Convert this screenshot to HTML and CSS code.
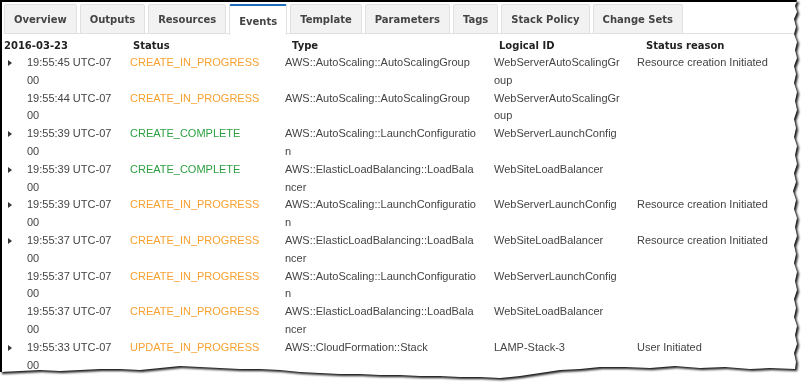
FILE: index.html
```html
<!DOCTYPE html>
<html lang="en">
<head>
    <meta charset="UTF-8">
    <title>Stack Events</title>
    <link rel="stylesheet" href="styles.css">
</head>
<body>
<div class="frame">
    <div class="sheet">
        <div class="tabs">
            <div class="tab">Overview</div>
            <div class="tab">Outputs</div>
            <div class="tab">Resources</div>
            <div class="tab active">Events</div>
            <div class="tab">Template</div>
            <div class="tab">Parameters</div>
            <div class="tab">Tags</div>
            <div class="tab">Stack Policy</div>
            <div class="tab">Change Sets</div>
        </div>
        <div class="head">
            <div>2016-03-23</div>
            <div>Status</div>
            <div>Type</div>
            <div>Logical ID</div>
            <div>Status reason</div>
        </div>
        <div class="events">
            <div class="row">
                <div class="caret"><span class="tri"></span></div>
                <div class="time">19:55:45 UTC-0700</div>
                <div class="progress">CREATE_IN_PROGRESS</div>
                <div class="type">AWS::AutoScaling::AutoScalingGroup</div>
                <div class="logical">WebServerAutoScalingGroup</div>
                <div>Resource creation Initiated</div>
            </div>
            <div class="row">
                <div class="caret"></div>
                <div class="time">19:55:44 UTC-0700</div>
                <div class="progress">CREATE_IN_PROGRESS</div>
                <div class="type">AWS::AutoScaling::AutoScalingGroup</div>
                <div class="logical">WebServerAutoScalingGroup</div>
                <div></div>
            </div>
            <div class="row">
                <div class="caret"><span class="tri"></span></div>
                <div class="time">19:55:39 UTC-0700</div>
                <div class="complete">CREATE_COMPLETE</div>
                <div class="type">AWS::AutoScaling::LaunchConfiguration</div>
                <div class="logical">WebServerLaunchConfig</div>
                <div></div>
            </div>
            <div class="row">
                <div class="caret"><span class="tri"></span></div>
                <div class="time">19:55:39 UTC-0700</div>
                <div class="complete">CREATE_COMPLETE</div>
                <div class="type">AWS::ElasticLoadBalancing::LoadBalancer</div>
                <div class="logical">WebSiteLoadBalancer</div>
                <div></div>
            </div>
            <div class="row">
                <div class="caret"><span class="tri"></span></div>
                <div class="time">19:55:39 UTC-0700</div>
                <div class="progress">CREATE_IN_PROGRESS</div>
                <div class="type">AWS::AutoScaling::LaunchConfiguration</div>
                <div class="logical">WebServerLaunchConfig</div>
                <div>Resource creation Initiated</div>
            </div>
            <div class="row">
                <div class="caret"><span class="tri"></span></div>
                <div class="time">19:55:37 UTC-0700</div>
                <div class="progress">CREATE_IN_PROGRESS</div>
                <div class="type">AWS::ElasticLoadBalancing::LoadBalancer</div>
                <div class="logical">WebSiteLoadBalancer</div>
                <div>Resource creation Initiated</div>
            </div>
            <div class="row">
                <div class="caret"></div>
                <div class="time">19:55:37 UTC-0700</div>
                <div class="progress">CREATE_IN_PROGRESS</div>
                <div class="type">AWS::AutoScaling::LaunchConfiguration</div>
                <div class="logical">WebServerLaunchConfig</div>
                <div></div>
            </div>
            <div class="row">
                <div class="caret"></div>
                <div class="time">19:55:37 UTC-0700</div>
                <div class="progress">CREATE_IN_PROGRESS</div>
                <div class="type">AWS::ElasticLoadBalancing::LoadBalancer</div>
                <div class="logical">WebSiteLoadBalancer</div>
                <div></div>
            </div>
            <div class="row">
                <div class="caret"><span class="tri"></span></div>
                <div class="time">19:55:33 UTC-0700</div>
                <div class="progress">UPDATE_IN_PROGRESS</div>
                <div class="type">AWS::CloudFormation::Stack</div>
                <div class="logical">LAMP-Stack-3</div>
                <div>User Initiated</div>
            </div>
        </div>
    </div>
</div>
</body>
</html>
```

FILE: styles.css
```css
* { box-sizing: border-box; }
html, body {
    margin: 0;
    background: #fff;
    overflow: hidden;
}
body {
    font-family: "Liberation Sans", Arial, sans-serif;
    font-size: 11px;
    color: #444;
}
/* torn paper look around the screenshot */
.frame {
    width: 810px;
    height: 385px;
    filter: drop-shadow(2px 2px 1.2px rgba(0,0,0,0.9));
}
.sheet {
    width: 802px;
    height: 384px;
    background: #fff;
    border-top: 2px solid #000;
    border-left: 2px solid #000;
    padding: 2px 0 0 2px;
    overflow: hidden;
    clip-path: polygon(0 0, 797px 0, 795px 6px, 797px 12px, 794px 19px, 796px 27px, 794px 34px, 797px 42px, 795px 50px, 797px 58px, 794px 66px, 796px 74px, 794px 83px, 797px 92px, 795px 101px, 797px 110px, 794px 119px, 796px 128px, 794px 137px, 797px 146px, 795px 155px, 797px 164px, 794px 173px, 796px 182px, 793px 191px, 796px 200px, 794px 209px, 797px 218px, 795px 227px, 797px 236px, 794px 245px, 796px 254px, 794px 263px, 797px 272px, 795px 281px, 797px 290px, 794px 299px, 796px 308px, 794px 317px, 797px 326px, 795px 335px, 797px 344px, 794px 353px, 796px 362px, 795px 369px, 770px 368px, 750px 369px, 725px 367px, 700px 368px, 675px 366px, 650px 368px, 625px 367px, 600px 367px, 580px 369px, 560px 370px, 540px 373px, 520px 376px, 500px 378px, 480px 377px, 460px 377px, 440px 376px, 420px 376px, 400px 375px, 380px 375px, 360px 374px, 340px 374px, 320px 373px, 300px 372px, 280px 370px, 260px 369px, 240px 369px, 220px 368px, 200px 367px, 180px 366px, 160px 368px, 140px 370px, 120px 369px, 100px 369px, 80px 370px, 60px 371px, 40px 370px, 20px 371px, 0 372px);
}
.tabs {
    display: flex;
    gap: 3px;
    height: 30px;
    border-bottom: 1px solid #e1e1e1;
    margin-right: 4px;
}
.tab {
    height: 30px;
    margin-bottom: -1px;
    padding: 0 9px;
    display: flex;
    align-items: center;
    background: #f2f2f2;
    border: 1px solid #e0e0e0;
    border-radius: 2px 2px 0 0;
    font-family: "DejaVu Sans", Verdana, sans-serif;
    font-weight: bold;
    font-size: 10px;
    color: #444;
}
.tab.active {
    background: #fff;
    border-top: 2px solid #1f6cb8;
    border-bottom-color: #fff;
    padding-top: 3px;
    height: 31px;
}
.head {
    display: grid;
    grid-template-columns: 129px 159px 207px 147px 1fr;
    height: 19px;
    padding-top: 3px;
    line-height: 17px;
    font-family: "DejaVu Sans", Verdana, sans-serif;
    font-weight: bold;
    font-size: 10px;
    color: #222;
}
.row {
    display: grid;
    grid-template-columns: 23px 103px 155px 209px 143px 1fr;
    height: 35.6px;
    padding-top: 1px;
    line-height: 17.8px;
}
.row > div {
    word-break: break-all;
}
.caret {
    padding-left: 4px;
}
.tri {
    display: inline-block;
    width: 0;
    height: 0;
    border-left: 4px solid #333;
    border-top: 3.5px solid transparent;
    border-bottom: 3.5px solid transparent;
}
.time { padding-right: 16px; }
.type { padding-right: 16px; }
.logical { padding-right: 15px; }
.progress { color: #f8a130; }
.complete { color: #2ea043; }
```
